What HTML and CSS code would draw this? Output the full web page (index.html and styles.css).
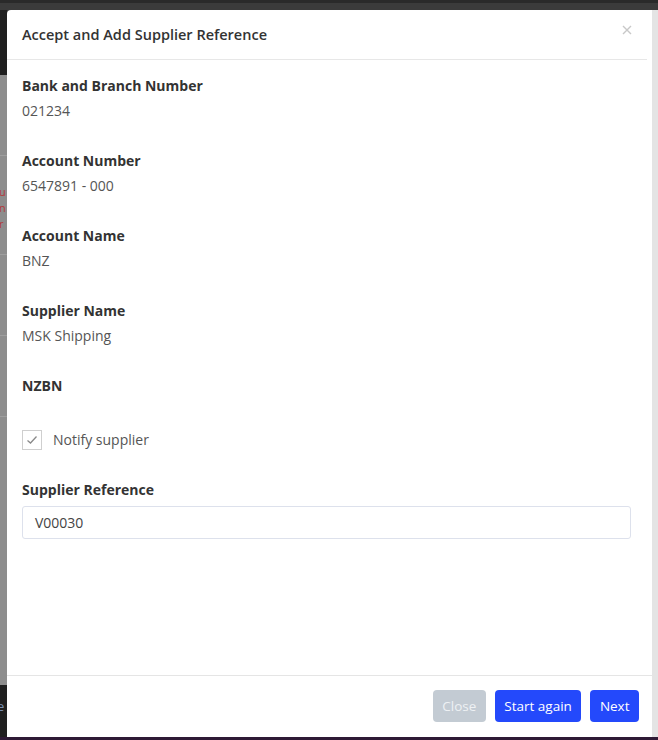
FILE: index.html
```html
<!DOCTYPE html>
<html lang="en">
<head>
<meta charset="utf-8">
<title>Accept and Add Supplier Reference</title>
<link rel="stylesheet" href="styles.css">
</head>
<body>
<div class="page">
  <div class="page-top"></div>
  <div class="page-left">
    <div class="pl-dark"></div>
    <div class="pl-gray">
      <div class="pl-row"></div>
      <div class="pl-row pl-red"><span>u</span><span>n</span><span>r</span></div>
      <div class="pl-row"></div>
      <div class="pl-row"></div>
    </div>
    <div class="pl-dark pl-bottom"><span>e</span></div>
  </div>
  <div class="scroll-track"></div>
  <div class="page-bottom"></div>
</div>

<div class="modal" role="dialog" aria-labelledby="modal-title">
  <div class="modal-header">
    <h4 id="modal-title" class="modal-title">Accept and Add Supplier Reference</h4>
    <button class="close-x" aria-label="Close">
      <svg width="10" height="10" viewBox="0 0 10 10"><path d="M1 1 L9 9 M9 1 L1 9" stroke="#c8c8c8" stroke-width="1.4" fill="none"/></svg>
    </button>
  </div>
  <div class="modal-body">
    <div class="field">
      <div class="label">Bank and Branch Number</div>
      <div class="value">021234</div>
    </div>
    <div class="field">
      <div class="label">Account Number</div>
      <div class="value">6547891 - 000</div>
    </div>
    <div class="field">
      <div class="label">Account Name</div>
      <div class="value">BNZ</div>
    </div>
    <div class="field">
      <div class="label">Supplier Name</div>
      <div class="value">MSK Shipping</div>
    </div>
    <div class="field field-nzbn">
      <div class="label">NZBN</div>
    </div>
    <label class="check-row">
      <span class="checkbox">
        <svg width="12" height="10" viewBox="0 0 12 10"><path d="M1.5 5.5 L4.5 8 L10.5 1.5" stroke="#8a8a8a" stroke-width="1.3" fill="none"/></svg>
      </span>
      <span class="check-label">Notify supplier</span>
    </label>
    <div class="field field-ref">
      <div class="label">Supplier Reference</div>
      <div class="input">V00030</div>
    </div>
  </div>
  <div class="modal-footer">
    <button class="btn btn-muted">Close</button>
    <button class="btn btn-primary">Start again</button>
    <button class="btn btn-primary">Next</button>
  </div>
</div>
</body>
</html>
```

FILE: styles.css
```css
html, body {
  margin: 0;
  padding: 0;
}
body {
  width: 658px;
  height: 740px;
  overflow: hidden;
  background: #3a3a3a;
  font-family: "Open Sans", "Noto Sans", sans-serif;
  position: relative;
}
.page {
  position: absolute;
  inset: 0;
}
.page-top {
  height: 10px;
  background: #3b3b3b;
  border-top: 3px solid #2a2a2a;
  box-sizing: border-box;
}
.page-left {
  position: absolute;
  left: 0;
  top: 10px;
  width: 7px;
  bottom: 3px;
  display: flex;
  flex-direction: column;
}
.pl-dark {
  height: 65px;
  background: #1f1f1f;
}
.pl-gray {
  flex: 1;
  background: #8d8d8d;
  display: flex;
  flex-direction: column;
}
.pl-row {
  height: 80px;
  border-bottom: 1px solid #9e9e9e;
}
.pl-red {
  height: 70px;
  padding-top: 28px;
  display: flex;
  flex-direction: column;
  color: #b33a3a;
  font-size: 11px;
  line-height: 16px;
  overflow: hidden;
}
.pl-red span {
  margin-left: -1px;
  height: 16px;
}
.pl-bottom {
  height: 52px;
  color: #7a8fb0;
  font-size: 13px;
  padding-top: 12px;
  box-sizing: border-box;
  overflow: hidden;
}
.pl-bottom span {
  margin-left: -3px;
}
.scroll-track {
  position: absolute;
  right: 0;
  top: 10px;
  width: 6px;
  bottom: 3px;
  background: #e4e4e4;
}
.page-bottom {
  position: absolute;
  left: 0;
  right: 0;
  bottom: 0;
  height: 3px;
  background: #2e1a35;
}

.modal {
  position: absolute;
  left: 7px;
  top: 10px;
  width: 645px;
  height: 727px;
  background: #fff;
  border-radius: 4px 0 0 0;
  display: flex;
  flex-direction: column;
  color: #333;
}
.modal-header {
  height: 49px;
  flex: none;
  border-bottom: 1px solid #e7e7e7;
  margin-right: 5px;
  display: flex;
  align-items: center;
  justify-content: space-between;
  padding: 0 15px;
}
.modal-title {
  margin: 0;
  font-size: 14.5px;
  font-weight: 600;
  color: #333;
}
.close-x {
  border: 0;
  background: none;
  padding: 0;
  margin-right: 0;
  display: flex;
  align-items: center;
  margin-top: -9px;
}
.modal-body {
  flex: 1;
  padding: 14.5px 21px 0 15px;
}
.field {
  margin-bottom: 29px;
}
.label {
  font-size: 14px;
  font-weight: 700;
  line-height: 21px;
  color: #333;
}
.value {
  font-size: 14px;
  line-height: 21px;
  margin-top: 4px;
  color: #555;
}
.field-nzbn {
  margin-bottom: 34px;
}
.check-row {
  display: flex;
  align-items: center;
  height: 20px;
  margin-bottom: 29px;
}
.checkbox {
  width: 18px;
  height: 18px;
  border: 1px solid #cfcfcf;
  display: flex;
  align-items: center;
  justify-content: center;
  margin-right: 11px;
}
.check-label {
  font-size: 14px;
  color: #555;
}
.field-ref .label {
  margin-bottom: 6px;
}
.input {
  height: 31px;
  border: 1px solid #dde1ec;
  border-radius: 3px;
  padding: 0 12px;
  font-size: 14px;
  line-height: 31px;
  color: #444;
}
.modal-footer {
  flex: none;
  border-top: 1px solid #e5e5e5;
  padding: 14px 13px 15px;
  display: flex;
  justify-content: flex-end;
  gap: 9px;
}
.btn {
  height: 32px;
  border: 0;
  border-radius: 4px;
  font-family: "Open Sans", "Noto Sans", sans-serif;
  font-size: 13.5px;
  color: #fff;
  padding: 0 9.5px;
}
.btn-muted {
  background: #c3cbd3;
  color: #eef1f4;
}
.btn-primary {
  background: #2449fb;
}
```
